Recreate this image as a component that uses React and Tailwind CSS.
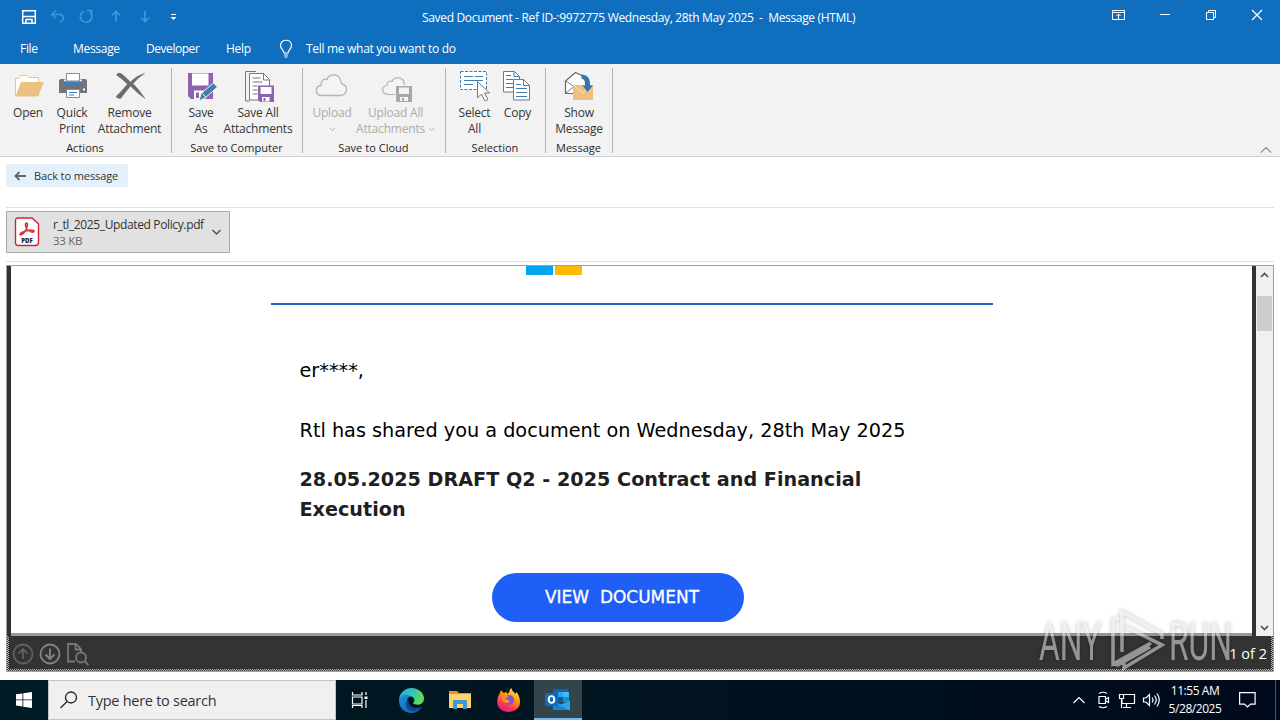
import React from 'react';

// Ribbon icons
const OpenIcon = () => (
  <svg width="34" height="34" viewBox="11 69 34 34" fill="none">
    <path d="M15.500 96V78.500h3l2-3h7l1.500 2h9.500V96" fill="#fff" stroke="#ecc58c" />
    <path d="M21 82h23l-6 14.500H15.500z" fill="#ecc07e" />
  </svg>
);

const PrintIcon = () => (
  <svg width="34" height="34" viewBox="55 69 34 34" fill="none">
    <path d="M59 81q0-2 2-2h24q2 0 2 2v12H59z" fill="#737373" />
    <path d="M64 79.500h18v2H64z" fill="#f2f2f2" />
    <path d="M64 81.500h18v3.500H64z" fill="#3f7cb8" />
    <path d="M66.500 73.500h13v7.500h-13z" fill="#fff" stroke="#8a8a8a" />
    <path d="M66.500 89.500h13v8h-13z" fill="#fff" stroke="#8a8a8a" />
    <path d="M69 92.500h8M69 95h5" stroke="#3f7cb8" />
    <path d="M83 88.500h2v2h-2z" fill="#fff" />
  </svg>
);

const RemoveIcon = () => (
  <svg width="34" height="34" viewBox="113 69 34 34">
    <path d="M116.500 75q1.500-3 4.500-1.500 4 3 9.500 8.500 6-6.500 14-8.500-7 4.500-11.500 10 6 6 12 15-7.500-5-14.500-12.500-4 5-10 12.500-3 .5-4.500-2 6-5.500 11.500-12.500-5-5-11-9z" fill="#6b6b6b" stroke="#6b6b6b" strokeWidth=".5" />
  </svg>
);

const SaveAsIcon = () => (
  <svg width="34" height="34" viewBox="184 69 34 34">
    <path d="M188 73h25v26h-22l-3-3z" fill="#8f62b0" />
    <path d="M192 73.500h16.500v12H192z" fill="#fff" />
    <path d="M194 90.500h11V99h-11z" fill="#fff" />
    <path d="M196 92.500h3V98h-3z" fill="#8f62b0" />
    <path d="m199 101 2-7.500L213.500 83l4 4L205 98z" fill="#3f7cae" stroke="#f2f2f2" />
    <path d="m202.500 93.500 3.500 4" stroke="#fff" />
  </svg>
);

const SaveAllIcon = () => (
  <svg width="34" height="34" viewBox="241 69 34 34" fill="none">
    <path d="M256 71.500h-10.500V101h4" stroke="#777" />
    <path d="M249.500 73.500h14l6 6V100h-20z" fill="#fff" stroke="#777" />
    <path d="M263.500 73.500v6.500h6M252.500 78h8M252.500 82h10M252.500 86h5M252.500 90h5M252.500 94h5" stroke="#777" />
    <path d="M258 85.500h16V102h-14l-2-2z" fill="#8f62b0" />
    <path d="M260.500 87h11v7h-11z" fill="#fff" />
    <path d="M262 97h7.500v4.500H262z" fill="#fff" />
    <path d="M263.500 98h2v3h-2z" fill="#8f62b0" />
  </svg>
);

const UploadIcon = () => (
  <svg width="34" height="34" viewBox="315 69 34 34">
    <path d="M322 95.500c-7 0-7.500-9-1-10-.5-5 3-7 6-6 2-6 12-7 14 2 .5 1 0 2 1 2.500 6 1.500 6.500 10-1 11.500z" fill="#f5f3f5" stroke="#b5b3b5" strokeWidth="1.300" />
  </svg>
);

const UploadAllIcon = () => (
  <svg width="34" height="34" viewBox="379 69 34 34">
    <path d="M395 94.500h-6c-8 0-8-8-2-9 0-4 2-5 5-4 2-5 11-5 12 1v2.500" fill="#f5f3f5" stroke="#b5b3b5" strokeWidth="1.200" />
    <path d="M396 86h16v16h-15l-1-1z" fill="#a8a8a8" />
    <path d="M399 87.500h10V94h-10zM400 97h8v4h-8z" fill="#f4f4f4" />
    <path d="M402 98h2v3h-2z" fill="#a8a8a8" />
  </svg>
);

const SelectIcon = () => (
  <svg width="34" height="34" viewBox="458 69 34 34" fill="none">
    <path d="M460.500 71.500h26v18h-26z" fill="#fff" stroke="#3f7cae" strokeDasharray="3 1.500" />
    <path d="M464 76.500h9M464 80.500h19M464 84.500h9M475 76.500h8" stroke="#3f7cae" strokeWidth="1.200" />
    <path d="M477.500 81.500v16.500l4-4 3.500 7 3-1.500-3.500-6.500h5z" fill="#fff" stroke="#777" />
  </svg>
);

const CopyIcon = () => (
  <svg width="34" height="34" viewBox="501 69 34 34" fill="none">
    <path d="M503.500 71.500h11l5 5V92h-16z" fill="#fff" stroke="#777" />
    <path d="M514 71.500v5h5M506 75.500h5M506 79.500h7M506 83.500h7M506 87.500h7" stroke="#3f7cae" />
    <path d="M513.500 79.500h10l6 6V100h-16z" fill="#fff" stroke="#777" />
    <path d="M523.500 79.500v6h6" stroke="#777" />
    <path d="M516 84.500h5M516 88.500h11M516 92.500h11M516 96.500h11" stroke="#3f7cae" />
  </svg>
);

const ShowIcon = () => (
  <svg width="34" height="34" viewBox="562 69 34 34" fill="none">
    <path d="M565.500 93.500V81l10-8.500 10 5v16z" fill="#fff" stroke="#666" strokeWidth="1.200" />
    <path d="M566 93l8-6.500M566 81l7 5" stroke="#777" />
    <path d="M573 85h20v15h-20z" fill="#ecc07e" />
    <path d="m573 85 10 7.500 10-7.500" stroke="#f8e3c3" />
    <path d="M581.500 74.500c6 .5 9 4 8.500 11h3l-5.500 6.500-5-6.500h3c0-4-1-6-4-7z" fill="#3474ae" />
  </svg>
);

const Caret = () => (
  <svg className="inline-block" width="7" height="5" viewBox="0 0 7 5" fill="none">
    <path d="m1 1 2.500 2.500L6 1" stroke="#b0b0b0" />
  </svg>
);

function RibbonButton({ icon, width, children, disabled }) {
  return (
    <button className={`${width} flex flex-col items-center pt-[5px] ${disabled ? 'text-[#acacac]' : 'text-[#363636]'}`}>
      {icon}
      <span className="mt-[2px] whitespace-nowrap text-center text-[12px] leading-4 tracking-[-0.200px]">{children}</span>
    </button>
  );
}

function RibbonGroup({ label, width, padding, children }) {
  return (
    <div className={`${width} flex h-full flex-col`}>
      <div className={`flex h-[76px] ${padding}`}>{children}</div>
      <div className="pr-[2px] text-center text-[11px] leading-4 tracking-[0.030px] text-[#262626]">{label}</div>
    </div>
  );
}

const Divider = () => <div className="-ml-px mt-1 h-[85px] w-px bg-[#b4b4b4]" />;

function TitleBar() {
  return (
    <div className="relative h-[34px] text-white">
      <svg className="block" width="200" height="34" fill="none" stroke="#3f96dd" strokeWidth="1.700">
        <path d="M22.700 10.700h12.600v12.600H22.700z" stroke="#fff" strokeWidth="1.500" />
        <path d="M23 16.500h12M26 23v-3.500h6V23" stroke="#fff" strokeWidth="1.500" />
        <path d="M56 10.500l-4 4 4 4M52.500 14.500h7c5 0 5 7 0 7.500" />
        <path d="M84 11.500c-5 2-5 9 1 10.500 6 1 9-6 5-10M87 10.500h4.500v5" />
        <path d="M116 22V11.500M112 15.500l4-4 4 4M145 11v10.500M141 17.500l4 4 4-4" />
        <path d="M171 14.500h5" stroke="#fff" strokeWidth="1" />
        <path d="M170.500 17h6l-3 3z" fill="#fff" stroke="none" />
      </svg>
      <div className="absolute inset-x-0 top-0 pl-[422px] text-[12px] leading-9 whitespace-pre">
        <span className="tracking-[-0.330px]">Saved Document - Ref ID-:9972775 Wednesday, 28th May 2025  -  Message (HTML)</span>
      </div>
      <svg className="absolute right-0 top-0" width="180" height="34" fill="none" stroke="#fff">
        <path d="M12.500 10.500h12v9h-12zM12.500 12.500h12M18.500 19v-5M16.500 16l2-2 2 2M60 14.500h10M106.500 12.500h7v7h-7zM108.500 12v-1.500h7v7H114" />
        <path d="m152 10 10 10M162 10l-10 10" strokeWidth="1.200" />
      </svg>
    </div>
  );
}

function Tabs() {
  return (
    <div className="flex h-[30px] items-center pl-5 text-[12px] tracking-[-0.300px] text-white">
      <span className="w-[53px]">File</span>
      <span className="w-[73px]">Message</span>
      <span className="w-[80px] tracking-[-0.450px]">Developer</span>
      <span className="w-[53px]">Help</span>
      <svg width="15" height="20" viewBox="0 0 15 20" fill="none" stroke="#fff">
        <path d="M5 14c0-3-3.500-4-3.500-7.500C1.500-.5 12.500-.5 12.500 6.500 12.500 10 9 11 9 14zM5 16h4M5.500 18h3" strokeWidth="1.200" />
      </svg>
      <span className="ml-3">Tell me what you want to do</span>
    </div>
  );
}

function Ribbon() {
  return (
    <div className="flex h-[93px] border-b border-[#d0d0d0] bg-[#f2f2f2]">
      <RibbonGroup label="Actions" width="w-[172px]" padding="pl-[6px]">
        <RibbonButton icon={<OpenIcon />} width="w-11">Open</RibbonButton>
        <RibbonButton icon={<PrintIcon />} width="w-11">Quick<br />Print</RibbonButton>
        <RibbonButton icon={<RemoveIcon />} width="w-[71px]">Remove<br />Attachment</RibbonButton>
      </RibbonGroup>
      <Divider />
      <RibbonGroup label="Save to Computer" width="w-[131px]" padding="pl-[8px]">
        <RibbonButton icon={<SaveAsIcon />} width="w-[42px]">Save<br />As</RibbonButton>
        <RibbonButton icon={<SaveAllIcon />} width="w-[72px]">Save All<br />Attachments</RibbonButton>
      </RibbonGroup>
      <Divider />
      <RibbonGroup label="Save to Cloud" width="w-[143px]" padding="pl-[7px]">
        <RibbonButton icon={<UploadIcon />} width="w-11" disabled>Upload<br /><Caret /></RibbonButton>
        <RibbonButton icon={<UploadAllIcon />} width="w-[83px]" disabled>Upload All<br />Attachments <Caret /></RibbonButton>
      </RibbonGroup>
      <Divider />
      <RibbonGroup label="Selection" width="w-[100px]" padding="pl-[7px]">
        <RibbonButton icon={<SelectIcon />} width="w-[43px]">Select<br />All</RibbonButton>
        <RibbonButton icon={<CopyIcon />} width="w-[43px]">Copy</RibbonButton>
      </RibbonGroup>
      <Divider />
      <RibbonGroup label="Message" width="w-[67px]" padding="pl-1">
        <RibbonButton icon={<ShowIcon />} width="w-[58px]">Show<br />Message</RibbonButton>
      </RibbonGroup>
      <Divider />
      <svg className="mt-auto mr-2 mb-[2px] ml-auto" width="12" height="8" fill="none" stroke="#444">
        <path d="m1 6.500 5-5 5 5" />
      </svg>
    </div>
  );
}

function AttachmentBar() {
  return (
    <div className="h-[108px] px-[6px] text-[#333]">
      <div className="h-[51px] border-b border-[#e1e1e1] pt-[7px]">
        <button className="flex h-[23px] w-[122px] items-center bg-[#e3f0f9] pl-2">
          <svg width="13" height="10" fill="none" stroke="#666" strokeWidth="1.800">
            <path d="M12 5H2M5.500 1 1.500 5l4 4" />
          </svg>
          <span className="ml-[7px] pt-px text-[11px] tracking-[-0.100px] whitespace-nowrap">Back to message</span>
        </button>
      </div>
      <div className="h-[54px] border-b border-[#e1e1e1] pt-[3px]">
        <div className="flex h-[42px] w-[224px] items-center border border-[#ababab] bg-[#e1e1e1] pl-[7px]">
          <svg width="26" height="30" viewBox="-0.500 0 26 30" fill="none">
            <path d="M3.500 1h14l6.500 6v18.500q0 3-3 3H3.500q-2.500 0-2.500-3V3.500Q1 1 3.500 1z" fill="#fff" stroke="#cf2434" strokeWidth="1.400" />
            <path d="M5.500 17.500c-1-2 9-5 13.500-4 2 1-2 3-5 0-3-2-4-7-2-7.500 2 0 .5 6-2 9-1.500 2-3.500 3.500-4.500 2.500z" stroke="#d92c2c" strokeWidth="1.500" />
            <text x="12.500" y="25.500" textAnchor="middle" fontSize="6" fontWeight="800" fill="#222">PDF</text>
          </svg>
          <div className="ml-[13px] w-[158px] pt-px text-[12px] leading-4 whitespace-nowrap">
            <div className="tracking-[-0.370px]">r_tl_2025_Updated Policy.pdf</div>
            <div className="text-[11.500px] tracking-[-0.300px] text-[#666]">33 KB</div>
          </div>
          <svg width="11" height="8" fill="none" stroke="#555" strokeWidth="1.500">
            <path d="m1.500 2 4 4 4-4" />
          </svg>
        </div>
      </div>
    </div>
  );
}

function Document() {
  return (
    <div className="flex-1 border-b-[3px] border-[#9a9a9a] bg-white font-['DejaVu_Sans',sans-serif]">
      <div className="flex h-[9px] gap-[2px] pl-[515px]">
        <div className="w-[27px] bg-[#05a6f0]" />
        <div className="w-[27px] bg-[#ffba08]" />
      </div>
      <div className="mt-[28px] ml-[260px] h-[2px] w-[722px] bg-[#2764c0]" />
      <div className="pt-[51px] pl-[288.500px] text-[19.250px] leading-[30px] whitespace-nowrap text-black">
        <p>er****,</p>
        <p className="mt-[30px]">Rtl has shared you a document on Wednesday, 28th May 2025</p>
        <p className="mt-[19px] text-[19.200px] font-bold text-[#1f1f1f]">
          28.05.2025 DRAFT Q2 - 2025 Contract and Financial<br />Execution
        </p>
      </div>
      <button className="mt-[48px] ml-[481px] flex h-[49px] w-[252px] items-center rounded-full bg-[#205ff5] pl-[53px] text-[17px] tracking-[-0.020px] whitespace-pre text-white [-webkit-text-stroke:0.300px_white]">
        VIEW  DOCUMENT
      </button>
    </div>
  );
}

function Preview() {
  return (
    <div className="mx-[6px] flex h-[407px] flex-col border border-[#a0a0a0] bg-[#333]">
      <div className="flex h-[370px]">
        <div className="w-1" />
        <Document />
        <div className="w-1" />
        <div className="flex w-[17px] flex-col items-center bg-[#f0f0f0]">
          <svg width="17" height="30" fill="none" stroke="#505050" strokeWidth="1.600"><path d="m5 11 3.500-3.500L12 11" /></svg>
          <div className="h-[35px] w-[15px] bg-[#cdcdcd]" />
          <svg className="mt-auto" width="17" height="17" fill="none" stroke="#505050" strokeWidth="1.600"><path d="m5 7 3.500 3.500L12 7" /></svg>
        </div>
      </div>
      <div className="flex-1 bg-[conic-gradient(#333_25%,#bbb_0_50%,#333_0_75%,#bbb_0)] bg-[length:2px_2px] px-[2px] pb-[2px]">
        <div className="flex h-full items-center justify-between bg-[#333] pt-[3px] pr-1 pl-[2px]">
          <svg width="80" height="26" viewBox="11 641 80 26" fill="none" strokeWidth="1.800">
            <g stroke="#606060"><circle cx="23" cy="654" r="9.500" /><path d="M23 659v-10M18.500 653.500 23 649l4.500 4.500" /></g>
            <g stroke="#858585"><circle cx="50" cy="654" r="9.500" /><path d="M50 648.500v10.500M45.500 654.500 50 659l4.500-4.500" /></g>
            <g stroke="#777"><path d="M75 661.500h-7v-17.500h8l5 5v3M75.500 644v5.500h5.500" /><circle cx="81" cy="657.500" r="5" /><path d="m84.500 661 4 4" /></g>
          </svg>
          <span className="text-[14.500px] text-white">1 of 2</span>
        </div>
      </div>
    </div>
  );
}

function Watermark() {
  return (
    <svg className="absolute top-[600px] left-[1030px]" width="250" height="80" viewBox="1030 600 250 80" opacity="0.550">
      <g className="drop-shadow-[0_0_2px_rgba(0,0,0,0.45)]" fill="#e5e5e5" fontFamily="Roboto, sans-serif" fontSize="53" fontWeight="400">
        <text x="1039" y="660" textLength="62" lengthAdjust="spacingAndGlyphs">ANY</text>
        <text x="1169" y="660" textLength="63" lengthAdjust="spacingAndGlyphs">RUN</text>
        <g fill="none" stroke="#e5e5e5" strokeWidth="3.500">
          <path d="M1122 652v-40l40 22v5M1119 618l-6 2v44l38-21M1126 627l36 18-38 23v-5M1113 664l5 1 32-18" />
        </g>
      </g>
    </svg>
  );
}

// Taskbar app icons
const EdgeIcon = () => (
  <svg width="25" height="25" viewBox="0 0 24 24">
    <defs>
      <linearGradient id="edgeTop" x1="0" x2="1" y1="0" y2=".4"><stop stopColor="#2aa7dc" /><stop offset=".55" stopColor="#37c3bf" /><stop offset="1" stopColor="#63d957" /></linearGradient>
      <linearGradient id="edgeLow" x1="0" x2="1" y1="0" y2="1"><stop stopColor="#2191dc" /><stop offset="1" stopColor="#0c59a4" /></linearGradient>
    </defs>
    <path d="M0 11C1 4 6 0 12 0c7 0 12 5 12 10 0 4-3 6-6 6-4 0-5-1-4-2 2-3 0-6-4-6-5 0-9 1-10 3z" fill="url(#edgeTop)" />
    <path d="M0 12c0-5 7-7 11-4-3 1-4 4-3 7 1 5 7 7 14 3-3 5-7 6-10 6C5 24 0 19 0 12z" fill="url(#edgeLow)" />
    <path d="M9 10c-4 4-3 11 3 12 4 1 8-1 10-4-7 3-14 0-13-8z" fill="#114a8b" />
  </svg>
);

const ExplorerIcon = () => (
  <svg width="22" height="20" viewBox="0 0 22 20">
    <path d="M0 1h8l2 2h12v4H0z" fill="#e09a25" />
    <path d="M0 4h22v14H0z" fill="#fbd56c" />
    <path d="M4 11.500q0-1.500 1.500-1.500h11q1.500 0 1.500 1.500V19h-4v-5H8v5H4z" fill="#3d98d4" />
  </svg>
);

const FirefoxIcon = () => (
  <svg width="24" height="24" viewBox="0 0 24 24">
    <defs><linearGradient id="fox" x1=".8" x2=".3" y1="0" y2="1"><stop stopColor="#fff44f" /><stop offset=".4" stopColor="#ff980e" /><stop offset=".75" stopColor="#ff3750" /><stop offset="1" stopColor="#e3158f" /></linearGradient></defs>
    <path d="M3 5l1-3 2.500 3 3-1 1 2c2-1 2-5 4-6 0 3 3 4 4 6l1-2c6 8 5 19-7.500 20C-1 24-2 12 3 5z" fill="url(#fox)" />
    <circle cx="12" cy="12" r="5" fill="#8051d8" />
    <path d="M5 7c3-1 5 0 7 2-2 0-3 1-4 2 2 0 4 1 5 3-3 2-6 1-8-2z" fill="#ff8b22" />
  </svg>
);

const OutlookIcon = () => (
  <svg width="26" height="24" viewBox="0 0 26 24">
    <path d="M8 1h15v12H8z" fill="#1066b5" />
    <path d="M13 4h5v5h-5z" fill="#28a8ea" /><path d="M18 4h6v5h-6z" fill="#45b9ee" /><path d="M13 9h5v5h-5z" fill="#0a5ca8" /><path d="M18 9h6v5h-6z" fill="#1490df" />
    <path d="M8 12.500l8 4 9-4V22H8z" fill="#28a8ea" />
    <path d="M8 14l16 8H8z" fill="#1784d8" />
    <rect y="5" width="13" height="13" rx="1" fill="#0f6cbd" />
    <ellipse cx="6.500" cy="11.500" rx="2.800" ry="3.400" fill="none" stroke="#fff" strokeWidth="1.900" />
  </svg>
);

function Taskbar() {
  return (
    <div className="mt-2 flex h-10 bg-linear-to-r from-[#001b24] via-[#00141f] to-[#000a1c] text-white">
      <div className="flex w-12 items-center justify-center">
        <svg width="16" height="16" fill="#fff"><path d="M0 2.300 6.500 1.400v6.100H0zM7.300 1.300 16 0v7.500H7.300zM0 8.300h6.500v6.200L0 13.600zM7.300 8.300H16V16l-8.700-1.300z" /></svg>
      </div>
      <div className="flex w-72 items-center border border-[#c4c4c4] bg-[#f0f0f0] pl-[11px] text-[#333]">
        <svg width="18" height="18" fill="none" stroke="#222" strokeWidth="1.300"><circle cx="11" cy="6.500" r="5.500" /><path d="M7 10.500.5 17" /></svg>
        <span className="ml-[10px] pt-[2px] text-[14.500px] tracking-[-0.270px] whitespace-nowrap">Type here to search</span>
      </div>
      <div className="flex w-12 items-center justify-center">
        <svg width="18" height="18" fill="none" stroke="#fff" strokeWidth="1.200"><path d="M1.500 1v3h9.500V1M1.500 6h9.500v7H1.500zM1.500 17v-2.500h9.500V17M15 1v3M15 9v8" /><path d="M13.500 5.500h3v2.500h-3z" fill="#fff" stroke="none" /></svg>
      </div>
      <div className="flex w-[54px] items-center justify-center"><EdgeIcon /></div>
      <div className="flex w-[43px] items-center justify-center"><ExplorerIcon /></div>
      <div className="flex w-[53px] items-center justify-center pl-[2px]"><FirefoxIcon /></div>
      <div className="flex w-12 items-center justify-center border-b-2 border-[#76b9ed] bg-[#33444d] pt-[2px]"><OutlookIcon /></div>
      <div className="ml-auto flex items-center">
        <svg width="90" height="20" viewBox="1072 690 90 20" fill="none" stroke="#fff" strokeWidth="1.200">
          <path d="m1073.500 703 5.500-5.500 5.500 5.500" />
          <path d="M1099 696.500h6.500v7H1099zM1106 699l2.500-1.500v5L1106 701M1099 693.500q4-2.500 8 0M1099 706.500q4 2.500 8 0" />
          <path d="M1124 694.500h10.500v9H1122v-4M1119.500 694.500h4v4h-4zM1121.500 699v9M1126.500 704v3.500M1123 707.500h8" />
          <path d="M1143.500 698h2.500l3.500-3.500v11L1146 702h-2.500zM1152 697.500q2 2.500 0 5M1154.500 695.500q3.500 4.500 0 9M1157 693.500q4.500 6.500 0 13" />
        </svg>
        <div className="w-[66px] text-center text-[12px] leading-[18px] tracking-[-0.450px] whitespace-nowrap">
          11:55 AM<br />5/28/2025
        </div>
        <svg className="ml-[11px]" width="17" height="18" fill="none" stroke="#fff" strokeWidth="1.200"><path d="M.6 1.600h15.500v11.500h-4.600L8.500 16l-3-2.900H.6z" /></svg>
        <div className="ml-[19px] h-10 w-px bg-[#4b535e]" />
        <div className="w-1" />
      </div>
    </div>
  );
}

function App() {
  return (
    <div className="relative h-[720px] w-[1280px] overflow-hidden bg-white font-['Open_Sans','Noto_Sans',sans-serif]">
      <div className="bg-[#106ebe]">
        <TitleBar />
        <Tabs />
      </div>
      <Ribbon />
      <AttachmentBar />
      <Preview />
      <Taskbar />
      <Watermark />
    </div>
  );
}

export default App;
